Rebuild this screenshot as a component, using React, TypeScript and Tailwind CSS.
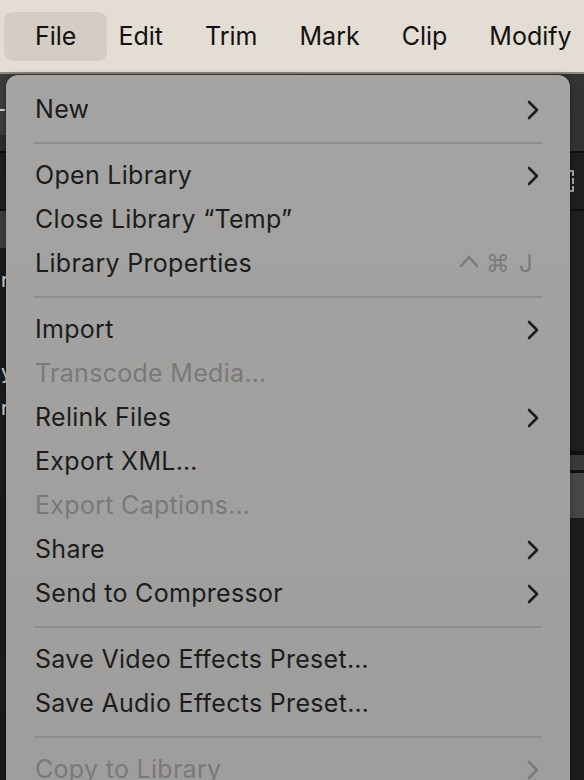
import React from "react";

type Row =
  | { kind: "sep" }
  | { kind: "item"; label: string; sub?: boolean; off?: boolean; keys?: boolean };

const rows: Row[] = [
  { kind: "item", label: "New", sub: true },
  { kind: "sep" },
  { kind: "item", label: "Open Library", sub: true },
  { kind: "item", label: "Close Library \u201CTemp\u201D" },
  { kind: "item", label: "Library Properties", keys: true },
  { kind: "sep" },
  { kind: "item", label: "Import", sub: true },
  { kind: "item", label: "Transcode Media\u2026", off: true },
  { kind: "item", label: "Relink Files", sub: true },
  { kind: "item", label: "Export XML\u2026" },
  { kind: "item", label: "Export Captions\u2026", off: true },
  { kind: "item", label: "Share", sub: true },
  { kind: "item", label: "Send to Compressor", sub: true },
  { kind: "sep" },
  { kind: "item", label: "Save Video Effects Preset\u2026" },
  { kind: "item", label: "Save Audio Effects Preset\u2026" },
  { kind: "sep" },
  { kind: "item", label: "Copy to Library", sub: true, off: true },
];

const Chevron = ({ off }: { off?: boolean }) => (
  <svg width="12" height="20" viewBox="0 0 12 20" fill="none">
    <path
      d="M2 2 L10 10 L2 18"
      stroke={off ? "#7b7a79" : "#1e1e1e"}
      strokeWidth="2.6"
      strokeLinecap="round"
      strokeLinejoin="round"
    />
  </svg>
);

// control key glyph
const Caret = () => (
  <svg width="20" height="14" viewBox="0 0 20 14" fill="none" className="mb-[6px]">
    <path d="M2 12 L10 3 L18 12" stroke="#7c7b7a" strokeWidth="2.6" strokeLinecap="round" strokeLinejoin="round" />
  </svg>
);

const MenuBar = () => (
  <div className="h-[74px] bg-[#e3ddd3] border-b-2 border-[#8e8981] flex items-center pl-[4px] text-[25px] text-[#111]">
    <div className="h-[49px] px-[31px] pt-[2px] rounded-[9px] bg-[#d3cdc4] flex items-center">File</div>
    <div className="flex items-center gap-[42px] ml-[11px] pt-[2px]">
      <span>Edit</span>
      <span>Trim</span>
      <span>Mark</span>
      <span>Clip</span>
      <span>Modify</span>
    </div>
  </div>
);

// the app window that sits behind the open menu
const Backdrop = () => (
  <div className="flex flex-1">
    <div className="w-[300px] flex flex-col">
      <div className="h-[61px] bg-[#3c3c3c] flex items-center">
        <div className="w-[5px] h-[2px] bg-[#d0d0d0] mt-[10px]" />
      </div>
      <div className="h-[16px] bg-[#2c2c2c]" />
      <div className="h-[2px] bg-[#0e0e0e]" />
      <div className="h-[56px] bg-[#1e1e1e]" />
      <div className="h-[2px] bg-[#0e0e0e]" />
      <div className="h-[37px] bg-[#3c3c3c]" />
      <div className="flex-1 bg-[#1b1b1b] text-[#d8d8d8] text-[20px] leading-none flex flex-col pt-[22px] pl-[1px]">
        <span>rate</span>
        <span className="mt-[72px]">y</span>
        <span className="mt-[16px]">rate</span>
      </div>
    </div>
    <div className="flex-1 flex flex-col">
      <div className="h-[77px] bg-[#333333]" />
      <div className="h-[2px] bg-[#0e0e0e]" />
      <div className="h-[56px] bg-[#1e1e1e] flex items-center justify-end pr-[10px]">
        <div className="w-[8px] h-[22px] border-2 border-dashed border-[#a8a8a8] rounded-[2px]" />
      </div>
      <div className="h-[2px] bg-[#0e0e0e]" />
      <div className="h-[240px] bg-[#1e1e1e]" />
      <div className="h-[4px] bg-[#101010]" />
      <div className="h-[15px] bg-[#3a3a3a]" />
      <div className="h-[3px] bg-[#101010]" />
      <div className="h-[45px] bg-[#474747]" />
      <div className="flex-1 bg-[#1c1c1c]" />
    </div>
  </div>
);

const FileMenu = () => (
  <div className="absolute left-[6px] top-[75px] w-[564px] h-[740px] rounded-[12px] bg-gradient-to-b from-[#a5a4a2] to-[#9e9d9c] shadow-[0_0_6px_rgba(0,0,0,0.35)] pt-[13px] flex flex-col">
    {rows.map((r, i) =>
      r.kind === "sep" ? (
        <div key={i} className="h-[22px] flex items-center px-[28px]">
          <div className="h-[2px] w-full bg-[#8f8e8c]" />
        </div>
      ) : (
        <div
          key={i}
          className={`h-[44px] shrink-0 flex items-center justify-between pl-[29px] pr-[31px] text-[25px] tracking-[0.3px] ${
            r.off ? "text-[#7a7978]" : "text-[#1c1c1c]"
          }`}
        >
          <span>{r.label}</span>
          {r.sub && <Chevron off={r.off} />}
          {r.keys && (
            <span className="flex items-center gap-[7px] text-[24px] text-[#7c7b7a] pr-[6px]">
              <Caret />
              <span className="font-['DejaVu_Sans',sans-serif]">{"\u2318"}</span>
              <span className="ml-[2px]">J</span>
            </span>
          )}
        </div>
      )
    )}
  </div>
);

export default function App() {
  return (
    <div className="relative w-[584px] h-[780px] overflow-hidden flex flex-col bg-[#1c1c1c] font-['Inter',sans-serif]">
      <MenuBar />
      <Backdrop />
      <FileMenu />
    </div>
  );
}
